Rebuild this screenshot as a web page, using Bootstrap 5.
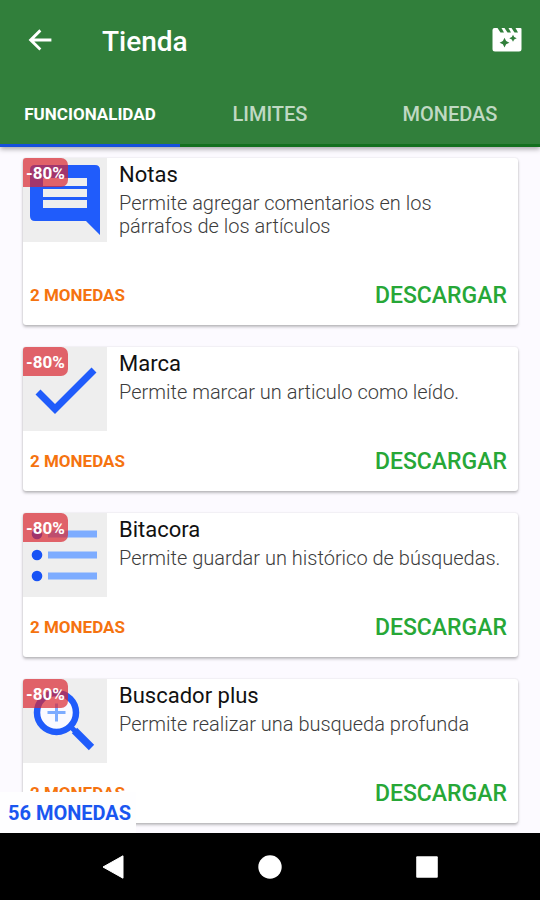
<!DOCTYPE html>
<html lang="es">
<head>
<meta charset="utf-8">
<meta name="viewport" content="width=device-width, initial-scale=1">
<title>Tienda</title>
<link href="https://cdn.jsdelivr.net/npm/bootstrap@5.3.0/dist/css/bootstrap.min.css" rel="stylesheet">
<style>
body { font-family: Roboto, "Noto Sans", sans-serif; background: #fcfaff; }
.app-header { background: #317f3b; box-shadow: 0 2px 5px rgba(0,0,0,.35); z-index: 2; }
.title-bar { height: 80px; padding: 2px 16px 0 22px; }
.title-bar h1 { font-size: 28px; line-height: 32px; font-weight: 500; margin: 2px 0 0 44px; }
.tab-bar { height: 67px; }
.tab-bar .nav-link { color: #c0d9c3; font-size: 20px; line-height: 24px; font-weight: 500; padding: 4px 0 0; border-radius: 0; border-bottom: 3px solid #13701f; }
.tab-bar .nav-link.active { color: #fff; font-size: 17px; font-weight: 700; background: none; border-bottom-color: #1650dc; }
.store-list { padding: 11px 22px 9px 23px; gap: 22px; }
.store-item { border: 0; border-radius: 3px; box-shadow: 0 2px 3px rgba(0,0,0,.25), 0 0 2px rgba(0,0,0,.12); }
.thumb { width: 84px; height: 84px; background: #eee; }
.discount { left: 0; top: 0; width: 45px; height: 29px; background: rgba(218,38,48,.7); color: #fff; font-size: 17px; font-weight: 700; border-radius: 3px 7px 7px 0; padding-top: 3px; }
.item-copy { padding: 2px 8px 27px 12px; }
.item-copy h2 { font-size: 22px; line-height: 30px; color: #111; font-weight: 400; margin: 0 0 2px; }
.item-copy p { font-size: 20px; line-height: 23px; color: #3c3c3c; font-weight: 300; }
.item-foot { height: 60px; padding: 2px 11px 0 7px; }
.price { color: #f5730f; font-size: 17px; font-weight: 700; }
.download { color: #27a737; font-size: 23px; line-height: 30px; font-weight: 500; }
.balance { left: 0; bottom: 0; height: 41px; padding: 1px 5px 0 8px; background: #fefeff; color: #1a56f0; font-size: 20px; font-weight: 700; z-index: 1; }
.system-nav { height: 67px; padding: 0 34px; background: #000; }
</style>
</head>
<body>
<div class="vh-100 d-flex flex-column overflow-hidden">
  <header class="app-header position-relative flex-shrink-0">
    <div class="title-bar d-flex align-items-center text-white">
      <button type="button" class="btn p-0 border-0 text-white d-flex" aria-label="Volver">
        <svg width="36" height="36" viewBox="0 0 24 24" fill="currentColor" aria-hidden="true"><path d="M19.600 10.300H8.200l4.700-4.700-1.300-1.400L4.400 11.300l7.200 7.100 1.300-1.400-4.700-4.700h11.400z"/></svg>
      </button>
      <h1>Tienda</h1>
      <button type="button" class="btn p-0 border-0 text-white d-flex ms-auto" aria-label="Ver video">
        <svg width="34" height="34" viewBox="0 0 34 34" aria-hidden="true"><path fill="currentColor" d="M4.500 4H7.500l3 4.500H14L11.500 4H14.500l3 4.500H21L18.500 4H21.500l3 4.500H28L25.500 4H30.500q1 0 1 1v20q0 2.500-2.500 2.500H5Q2.500 27.500 2.500 25V6q0-2 2-2z"/><path fill="#317f3b" d="m14.500 13.800 1.600 3.300 3.300 1.600-3.300 1.600-1.600 3.300-1.600-3.300-3.300-1.600 3.300-1.600zM23 10.800l1.200 2.300 2.500 1.200-2.500 1.200-1.200 2.300-1.200-2.300-2.500-1.200 2.500-1.200z"/></svg>
      </button>
    </div>
    <nav class="tab-bar nav nav-fill" aria-label="Secciones">
      <a href="#" class="nav-link active col-4 d-flex align-items-center justify-content-center" aria-current="page">FUNCIONALIDAD</a>
      <a href="#" class="nav-link col-4 d-flex align-items-center justify-content-center">LIMITES</a>
      <a href="#" class="nav-link col-4 d-flex align-items-center justify-content-center">MONEDAS</a>
    </nav>
  </header>

  <div class="position-relative flex-fill d-flex flex-column overflow-hidden">
    <main class="store-list d-flex flex-column flex-fill overflow-auto">
      <article class="store-item card flex-shrink-0">
        <div class="d-flex">
          <div class="thumb position-relative flex-shrink-0">
            <svg width="84" height="84" viewBox="0 0 84 84" aria-hidden="true"><path fill="#205cfb" d="M12 7h60q5 0 5 5v65L63 63H12q-5 0-5-5V12q0-5 5-5z"/><path fill="#eee" d="M20 20h44v8H20zM20 31h44v8H20zM20 42h44v8H20z"/></svg>
            <span class="discount position-absolute d-flex align-items-center justify-content-center">-80%</span>
          </div>
          <div class="item-copy"><h2>Notas</h2><p class="mb-0">Permite agregar comentarios en los párrafos de los artículos</p></div>
        </div>
        <div class="item-foot d-flex align-items-center justify-content-between">
          <span class="price">2 MONEDAS</span><button type="button" class="download btn p-0 border-0">DESCARGAR</button>
        </div>
      </article>

      <article class="store-item card flex-shrink-0">
        <div class="d-flex">
          <div class="thumb position-relative flex-shrink-0">
            <svg width="84" height="84" viewBox="0 0 84 84" aria-hidden="true"><path fill="none" stroke="#205cfb" stroke-width="7" d="m15 45 17 17 39-39"/></svg>
            <span class="discount position-absolute d-flex align-items-center justify-content-center">-80%</span>
          </div>
          <div class="item-copy"><h2>Marca</h2><p class="mb-0">Permite marcar un articulo como leído.</p></div>
        </div>
        <div class="item-foot d-flex align-items-center justify-content-between">
          <span class="price">2 MONEDAS</span><button type="button" class="download btn p-0 border-0">DESCARGAR</button>
        </div>
      </article>

      <article class="store-item card flex-shrink-0">
        <div class="d-flex">
          <div class="thumb position-relative flex-shrink-0">
            <svg width="84" height="84" viewBox="0 0 84 84" aria-hidden="true"><path fill="#7dacff" d="M25 17.500h49v7H25zM25 38.500h49v7H25zM25 59.500h49v7H25z"/><g fill="#1853f5"><circle cx="14" cy="21" r="5.300"/><circle cx="14" cy="42" r="5.300"/><circle cx="14" cy="63" r="5.300"/></g></svg>
            <span class="discount position-absolute d-flex align-items-center justify-content-center">-80%</span>
          </div>
          <div class="item-copy"><h2>Bitacora</h2><p class="mb-0">Permite guardar un histórico de búsquedas.</p></div>
        </div>
        <div class="item-foot d-flex align-items-center justify-content-between">
          <span class="price">2 MONEDAS</span><button type="button" class="download btn p-0 border-0">DESCARGAR</button>
        </div>
      </article>

      <article class="store-item card flex-shrink-0">
        <div class="d-flex">
          <div class="thumb position-relative flex-shrink-0">
            <svg width="84" height="84" viewBox="0 0 84 84" aria-hidden="true"><circle cx="33.500" cy="33.500" r="19.500" fill="#fafaff" stroke="#205cfb" stroke-width="6.500"/><path fill="none" stroke="#7dacff" stroke-width="3" d="M24.500 33.500h18M33.500 24.500v18"/><path fill="none" stroke="#205cfb" stroke-width="5" d="m47 47 6 6"/><path fill="none" stroke="#205cfb" stroke-width="7.500" d="m51.500 51.500 17 17"/></svg>
            <span class="discount position-absolute d-flex align-items-center justify-content-center">-80%</span>
          </div>
          <div class="item-copy"><h2>Buscador plus</h2><p class="mb-0">Permite realizar una busqueda profunda</p></div>
        </div>
        <div class="item-foot d-flex align-items-center justify-content-between">
          <span class="price">2 MONEDAS</span><button type="button" class="download btn p-0 border-0">DESCARGAR</button>
        </div>
      </article>
    </main>
    <div class="balance position-absolute d-flex align-items-center">56 MONEDAS</div>
  </div>

  <nav class="system-nav d-flex align-items-center justify-content-around flex-shrink-0" aria-label="Sistema">
    <button type="button" class="btn p-0 border-0 d-flex" aria-label="Atrás"><svg width="24" height="24" viewBox="0 0 24 24" aria-hidden="true"><path fill="#fff" stroke="#fff" stroke-linejoin="round" d="M2 12 22 .8v22.400z"/></svg></button>
    <button type="button" class="btn p-0 border-0 d-flex" aria-label="Inicio"><svg width="24" height="24" viewBox="0 0 24 24" aria-hidden="true"><circle cx="12" cy="12" r="11.700" fill="#fff"/></svg></button>
    <button type="button" class="btn p-0 border-0 d-flex" aria-label="Recientes"><svg width="24" height="24" viewBox="0 0 24 24" aria-hidden="true"><rect x="1.200" y="1.200" width="21.600" height="21.600" rx="1" fill="#fff"/></svg></button>
  </nav>
</div>
<script src="https://cdn.jsdelivr.net/npm/bootstrap@5.3.0/dist/js/bootstrap.bundle.min.js"></script>
</body>
</html>
